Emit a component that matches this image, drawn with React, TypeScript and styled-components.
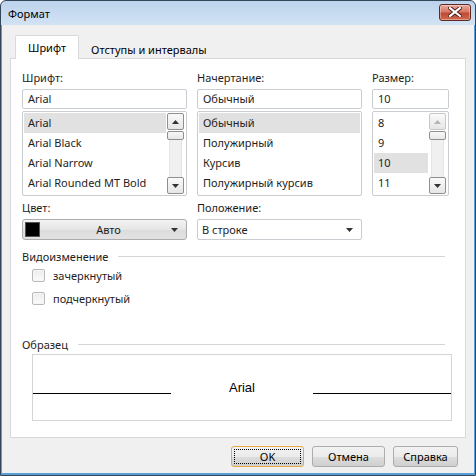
import styled, { createGlobalStyle } from "styled-components";

const GlobalStyle = createGlobalStyle`
  html, body { margin: 0; padding: 0; background: #fff; }
  body { font-family: "Noto Sans", "Liberation Sans", sans-serif; font-size: 11px; color: #1e1e1e; }
  * { box-sizing: border-box; }
`;

const fonts = ["Arial", "Arial Black", "Arial Narrow", "Arial Rounded MT Bold"];
const styles = ["Обычный", "Полужирный", "Курсив", "Полужирный курсив"];
const sizes = ["8", "9", "10", "11"];

const Arrow = ({ up, disabled }: { up?: boolean; disabled?: boolean }) => (
  <svg width="7" height="4" viewBox="0 0 7 4">
    <polygon
      points={up ? "0,4 3.5,0 7,4" : "0,0 7,0 3.5,4"}
      fill={disabled ? "#b5b5b5" : "#333"}
    />
  </svg>
);

const ListBox = ({
  items,
  selected,
  disabledUp,
  noScroll,
}: {
  items: string[];
  selected: number;
  disabledUp?: boolean;
  noScroll?: boolean;
}) => (
  <List>
    <Items>
      {items.map((it, i) => (
        <Item key={it} $selected={i === selected}>
          {it}
        </Item>
      ))}
    </Items>
    {!noScroll && (
      <ScrollBar>
        <ScrollBtn $disabled={disabledUp}>
          <Arrow up disabled={disabledUp} />
        </ScrollBtn>
        <Thumb />
        <Track />
        <ScrollBtn>
          <Arrow />
        </ScrollBtn>
      </ScrollBar>
    )}
  </List>
);

const App = () => {
  return (
    <>
      <GlobalStyle />
      <Window>
        <TitleBar>
          <Title>Формат</Title>
          <CloseBtn>
            <svg width="14" height="10" viewBox="0 0 14 10">
              <path d="M2 1 L12 9 M12 1 L2 9" stroke="#4a1a14" strokeWidth="4" strokeLinecap="square" />
              <path d="M2 1 L12 9 M12 1 L2 9" stroke="#fff" strokeWidth="2.2" strokeLinecap="square" />
            </svg>
          </CloseBtn>
        </TitleBar>
        <Body>
          <Tabs>
            <Tab $active>Шрифт</Tab>
            <Tab>Отступы и интервалы</Tab>
          </Tabs>
          <Panel>
            <Columns>
              <Field>
                <Label>Шрифт:</Label>
                <TextInput>Arial</TextInput>
                <ListBox items={fonts} selected={0} />
              </Field>
              <Field>
                <Label>Начертание:</Label>
                <TextInput>Обычный</TextInput>
                <ListBox items={styles} selected={0} noScroll />
              </Field>
              <Field>
                <Label>Размер:</Label>
                <TextInput>10</TextInput>
                <ListBox items={sizes} selected={2} disabledUp />
              </Field>
            </Columns>
            <Columns>
              <Field>
                <Label $top={4}>Цвет:</Label>
                <ColorButton>
                  <Swatch />
                  <ColorText>Авто</ColorText>
                  <Arrow />
                </ColorButton>
              </Field>
              <Field>
                <Label $top={4}>Положение:</Label>
                <Combo>
                  <span>В строке</span>
                  <Arrow />
                </Combo>
              </Field>
            </Columns>
            <GroupHeader $top={8}>
              <span>Видоизменение</span>
              <Rule />
            </GroupHeader>
            <CheckRow>
              <CheckBox />
              <span>зачеркнутый</span>
            </CheckRow>
            <CheckRow>
              <CheckBox />
              <span>подчеркнутый</span>
            </CheckRow>
            <GroupHeader $top={26}>
              <span>Образец</span>
              <Rule />
            </GroupHeader>
            <Preview>
              <PreviewLine />
              <PreviewText>Arial</PreviewText>
              <PreviewLine />
            </Preview>
          </Panel>
          <Footer>
            <Button $focused>
              <FocusRect>OK</FocusRect>
            </Button>
            <Button>Отмена</Button>
            <Button $width={65}>Справка</Button>
          </Footer>
        </Body>
      </Window>
    </>
  );
};

export default App;

const Window = styled.div`
  width: 476px;
  height: 476px;
  display: flex;
  flex-direction: column;
  border: 1px solid #34465a;
  border-radius: 6px 6px 0 0;
  background: linear-gradient(#bcd3ec, #d3e3f4 25px);
  overflow: hidden;
`;

const TitleBar = styled.div`
  height: 24px;
  display: flex;
  align-items: center;
  justify-content: space-between;
  padding: 0 4px 0 7px;
`;

const Title = styled.div`
  font-size: 11px;
  color: #000;
`;

const CloseBtn = styled.div`
  width: 32px;
  height: 17px;
  margin-top: -2px;
  border: 1px solid #5e2a22;
  border-radius: 3px;
  background: linear-gradient(#e9a99c, #d67966 45%, #c24a35 55%, #cf6a4f);
  display: flex;
  align-items: center;
  justify-content: center;
  box-shadow: inset 0 0 0 1px rgba(255, 255, 255, 0.35);
`;

const Body = styled.div`
  flex: 1;
  display: flex;
  flex-direction: column;
  background: #f0f0f0;
  border-left: 1px solid #5a9ed8;
  border-right: 1px solid #5a9ed8;
  border-bottom: 2px solid #5a9ed8;
  padding: 10px 8px 0 8px;
`;

const Tabs = styled.div`
  display: flex;
  padding-left: 5px;
  height: 23px;
  align-items: flex-end;
`;

const Tab = styled.div<{ $active?: boolean }>`
  height: ${(p) => (p.$active ? "24px" : "21px")};
  padding: ${(p) => (p.$active ? "0 12px" : "0 11px")};
  display: flex;
  align-items: center;
  color: #000;
  margin-bottom: ${(p) => (p.$active ? "-1px" : "0")};
  border: ${(p) => (p.$active ? "1px solid #d9d9d9" : "1px solid transparent")};
  border-bottom: none;
  border-radius: 2px 2px 0 0;
  background: ${(p) => (p.$active ? "#fff" : "transparent")};
  padding-top: ${(p) => (p.$active ? "0" : "2px")};
  position: relative;
  z-index: 1;
`;

const Panel = styled.div`
  height: 380px;
  background: #fff;
  border: 1px solid #d9d9d9;
  padding: 11px 19px 0 11px;
  display: flex;
  flex-direction: column;
`;

const Columns = styled.div`
  display: grid;
  grid-template-columns: 165px 165px 77px;
  column-gap: 10px;
`;

const Field = styled.div`
  display: flex;
  flex-direction: column;
`;

const Label = styled.div<{ $top?: number }>`
  height: 16px;
  line-height: 16px;
  margin-top: ${(p) => p.$top ?? 0}px;
  margin-bottom: 3px;
`;

const TextInput = styled.div`
  height: 20px;
  border: 1px solid #c9cdd2;
  border-radius: 2px;
  padding: 0 5px;
  line-height: 18px;
  background: #fff;
`;

const List = styled.div`
  margin-top: 2px;
  height: 85px;
  border: 1px solid #c9cdd2;
  border-radius: 2px;
  padding: 1px;
  display: flex;
  overflow: hidden;
`;

const Items = styled.div`
  flex: 1;
  display: flex;
  flex-direction: column;
`;

const Item = styled.div<{ $selected?: boolean }>`
  height: 20px;
  line-height: 20px;
  padding-left: 4px;
  white-space: nowrap;
  background: ${(p) => (p.$selected ? "#e1e1e1" : "transparent")};
`;

const ScrollBar = styled.div`
  width: 19px;
  display: flex;
  flex-direction: column;
  padding: 0 1px;
  background: #fff;
`;

const ScrollBtn = styled.div<{ $disabled?: boolean }>`
  height: 17px;
  border: 1px solid ${(p) => (p.$disabled ? "#c8c8c8" : "#8e8f8f")};
  border-radius: 2px;
  background: linear-gradient(#fafafa, #e6e6e6);
  display: flex;
  align-items: center;
  justify-content: center;
`;

const Thumb = styled.div`
  height: 9px;
  margin-top: 1px;
  border: 1px solid #8e8f8f;
  border-radius: 2px;
  background: linear-gradient(#f8f8f8, #e8e8e8);
`;

const Track = styled.div`
  flex: 1;
  margin: 0 2px;
  background: #f0f0f0;
  border-left: 1px solid #e5e5e5;
  border-right: 1px solid #e5e5e5;
`;

const ColorButton = styled.div`
  height: 21px;
  border: 1px solid #acacac;
  border-radius: 3px;
  background: linear-gradient(#f3f3f3, #e5e5e5 50%, #dcdcdc 51%, #e2e2e2);
  display: flex;
  align-items: center;
  padding: 0 8px 0 2px;
`;

const Swatch = styled.div`
  width: 15px;
  height: 15px;
  background: #000;
  border: 1px solid #555;
`;

const ColorText = styled.div`
  flex: 1;
  text-align: center;
  padding-left: 6px;
`;

const Combo = styled.div`
  height: 21px;
  border: 1px solid #c9cdd2;
  border-radius: 2px;
  background: #fff;
  display: flex;
  align-items: center;
  justify-content: space-between;
  padding: 0 8px 0 4px;
`;

const GroupHeader = styled.div<{ $top: number }>`
  margin-top: ${(p) => p.$top}px;
  height: 16px;
  display: flex;
  align-items: center;
  gap: 10px;
`;

const Rule = styled.div`
  flex: 1;
  height: 1px;
  margin-right: 1px;
  background: #d5d5d5;
`;

const CheckRow = styled.div`
  height: 23px;
  display: flex;
  align-items: center;
  gap: 8px;
  padding-left: 10px;
`;

const CheckBox = styled.div`
  width: 13px;
  height: 13px;
  border: 1px solid #b9b9b9;
  border-radius: 2px;
  background: linear-gradient(#ececec, #fbfbfb);
  box-shadow: inset 0 0 0 1px #f6f6f6;
`;

const Preview = styled.div`
  margin: 2px 0 0 10px;
  width: 420px;
  height: 67px;
  border: 1px solid #d5d5d5;
  display: grid;
  grid-template-columns: 1fr 142px 1fr;
  align-items: center;
`;

const PreviewLine = styled.div`
  height: 1px;
  margin-top: 12px;
  background: #000;
`;

const PreviewText = styled.div`
  font-family: "Liberation Sans", Arial, sans-serif;
  font-size: 13px;
  color: #000;
  text-align: center;
`;

const Footer = styled.div`
  display: flex;
  justify-content: flex-end;
  gap: 8px;
  padding: 8px 8px 0 0;
`;

const Button = styled.div<{ $focused?: boolean; $width?: number }>`
  width: ${(p) => p.$width ?? 73}px;
  height: 21px;
  border: 1px solid ${(p) => (p.$focused ? "#e8a845" : "#acacac")};
  border-radius: 3px;
  background: linear-gradient(#f2f2f2, #ebebeb 50%, #dddddd 51%, #cfcfcf);
  display: flex;
  align-items: center;
  justify-content: center;
  padding: 2px;
  color: #000;
`;

const FocusRect = styled.div`
  width: 100%;
  height: 100%;
  border: 1px dotted #000;
  display: flex;
  align-items: center;
  justify-content: center;
`;
